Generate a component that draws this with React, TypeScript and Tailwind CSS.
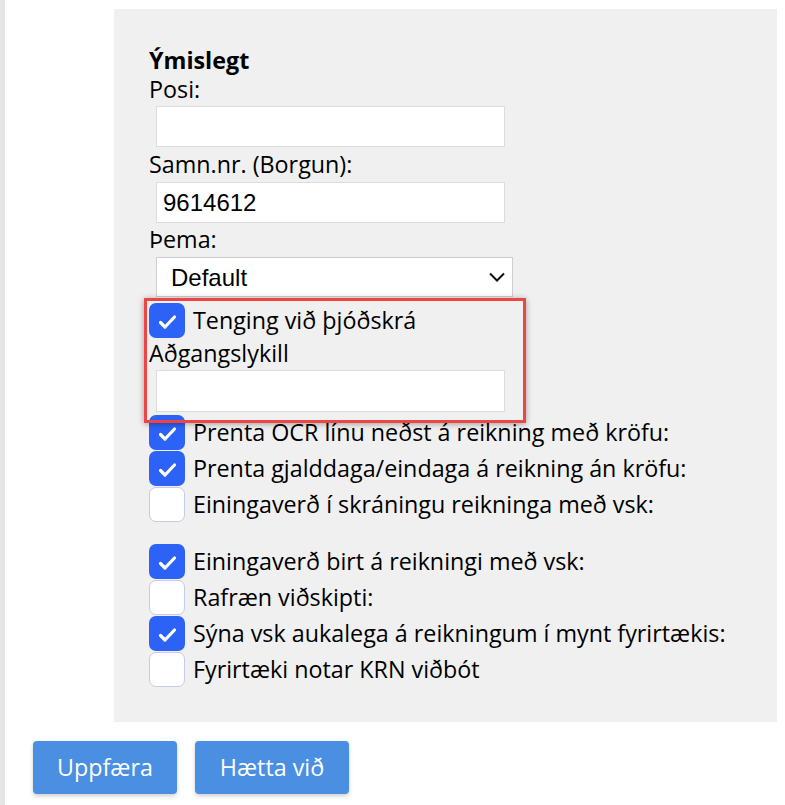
const sans = { fontFamily: '"Open Sans", "Segoe UI", sans-serif' };
const arial = { fontFamily: '"Liberation Sans", Arial, sans-serif' };

function Check({ on }: { on: boolean }) {
  if (!on) {
    return (
      <span className="w-[36px] h-[35px] shrink-0 rounded-[7px] border border-[#c5cae6] bg-white" />
    );
  }
  return (
    <span className="w-[36px] h-[35px] shrink-0 rounded-[7px] bg-[#2d62f6] flex items-center justify-center">
      <svg width="36" height="35" viewBox="0 0 36 35">
        <polyline
          points="11.5 19.5 16 24 25.5 14"
          fill="none"
          stroke="white"
          strokeWidth="3.2"
          strokeLinecap="round"
          strokeLinejoin="round"
        />
      </svg>
    </span>
  );
}

function CheckRow({ on, label }: { on: boolean; label: string }) {
  return (
    <div className="flex items-center gap-[8px] h-[36px] leading-[36px]">
      <Check on={on} />
      <span>{label}</span>
    </div>
  );
}

function Field({ value, className }: { value?: string; className?: string }) {
  return (
    <div
      className={`ml-[7px] w-[349px] h-[41px] bg-white border border-[#dcdcdc] flex items-center pl-[6px] text-[24px] text-black ${className ?? ""}`}
      style={arial}
    >
      {value}
    </div>
  );
}

export default function App() {
  return (
    <div className="relative flex min-h-[805px] bg-white text-black" style={sans}>
      {/* left strip */}
      <div className="w-[5px] shrink-0 bg-[#e6e6e6]" />

      <div className="flex-1 pt-[9px]">
        <div className="ml-[109px] w-[663px] bg-[#f0f0f0] pl-[35px] pt-[37px] pb-[35px] text-[23.3px] leading-[29px]">
          <div className="font-bold">Ýmislegt</div>
          <div>Posi:</div>
          <Field className="mt-[2px]" />

          <div className="mt-[3px]">Samn.nr. (Borgun):</div>
          <Field className="mt-[3px]" value="9614612" />

          <div className="mt-[2px]">Þema:</div>
          <div
            className="mt-[3px] ml-[7px] w-[357px] h-[40px] bg-white border border-[#cfcfcf] flex items-center justify-between pl-[14px] pr-[7px] text-[24px]"
            style={arial}
          >
            <span>Default</span>
            <svg width="16" height="10" viewBox="0 0 16 10">
              <polyline points="1 1.5 8 8.5 15 1.5" fill="none" stroke="#111" strokeWidth="2" />
            </svg>
          </div>

          <div className="mt-[5px]">
            <CheckRow on label="Tenging við þjóðskrá" />
          </div>
          <div className="mt-[1px]">Aðgangslykill</div>
          <Field className="mt-[2px] h-[42px]" />

          <div className="mt-[2px]">
            <CheckRow on label="Prenta OCR línu neðst á reikning með kröfu:" />
            <CheckRow on label="Prenta gjalddaga/eindaga á reikning án kröfu:" />
            <CheckRow on={false} label="Einingaverð í skráningu reikninga með vsk:" />
            <div className="h-[21px]" />
            <CheckRow on label="Einingaverð birt á reikningi með vsk:" />
            <CheckRow on={false} label="Rafræn viðskipti:" />
            <CheckRow on label="Sýna vsk aukalega á reikningum í mynt fyrirtækis:" />
            <CheckRow on={false} label="Fyrirtæki notar KRN viðbót" />
          </div>
        </div>

        <div className="mt-[19px] ml-[28px] flex gap-[18px]">
          <button className="w-[144px] h-[53px] rounded-[4px] bg-[#4a8fe2] text-white text-[23.3px] shadow-[0_2px_4px_rgba(0,0,0,0.2)]">
            Uppfæra
          </button>
          <button className="w-[154px] h-[53px] rounded-[4px] bg-[#4a8fe2] text-white text-[23.3px] shadow-[0_2px_4px_rgba(0,0,0,0.2)]">
            Hætta við
          </button>
        </div>
      </div>

      {/* red highlight annotation */}
      <div className="absolute left-[144px] top-[298px] w-[382px] h-[125px] border-[3px] border-[#ec4545] shadow-[0_1px_6px_rgba(0,0,0,0.35)] pointer-events-none" />
    </div>
  );
}
